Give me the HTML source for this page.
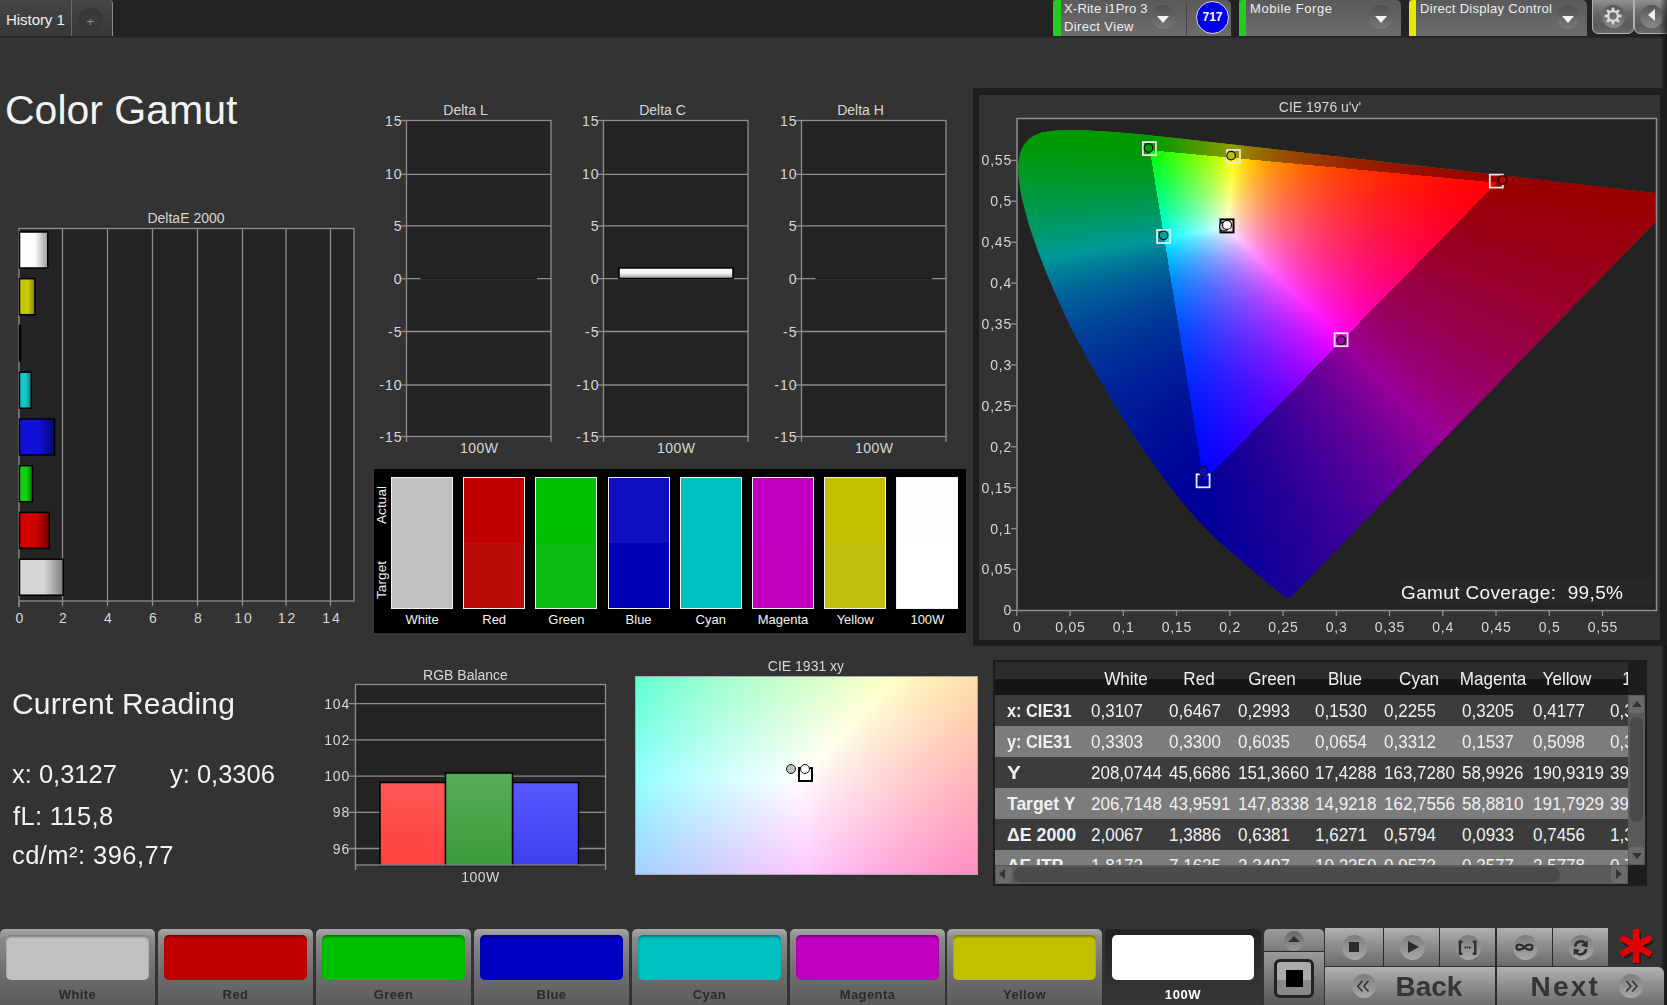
<!DOCTYPE html>
<html><head><meta charset="utf-8">
<style>
*{box-sizing:border-box}
html,body{margin:0;padding:0}
body{width:1667px;height:1005px;background:#333;position:relative;overflow:hidden;font-family:"Liberation Sans",sans-serif;color:#ddd}
.a{position:absolute}
.t{position:absolute;white-space:nowrap;line-height:1}
svg text{font-family:"Liberation Sans",sans-serif}
</style></head>
<body>

<div class="a" style="left:0;top:0;width:1667px;height:37px;background:#232323"></div>
<div class="a" style="left:0;top:37px;width:1667px;height:1px;background:#292929"></div>
<div class="a" style="left:0;top:0;width:71px;height:36px;background:linear-gradient(#454545,#383838)"></div>
<div class="a" style="left:71px;top:0;width:1px;height:36px;background:#6a6a6a"></div>
<div class="a" style="left:72px;top:0;width:41px;height:36px;background:linear-gradient(#454545,#383838);border-right:1px solid #8a8a8a;border-top-right-radius:4px"></div>
<div class="a" style="left:79px;top:8px;width:24px;height:24px;border-radius:50%;background:radial-gradient(#3c3c3c,#353535)"></div>
<div class="t" style="left:86.5px;top:15px;font-size:13px;color:#8a8a8a">+</div>
<div class="t" style="left:6px;top:12px;font-size:15px;letter-spacing:-0.05px;color:#eee">History 1</div>

<div class="a" style="left:1053px;top:0;width:178px;height:36px;background:linear-gradient(#5a5a5a,#6c6c6c);border-top-right-radius:5px"></div>
<div class="a" style="left:1053px;top:0;width:8px;height:36px;background:#22cc22;border-top-left-radius:4px"></div>
<div class="a" style="left:1186px;top:2px;width:1px;height:34px;background:#444"></div>
<div class="t" style="left:1064px;top:2px;font-size:13px;letter-spacing:0.2px;color:#eee">X-Rite i1Pro 3</div>
<div class="t" style="left:1064px;top:20px;font-size:13px;letter-spacing:0.4px;color:#eee">Direct View</div>
<div class="a" style="left:1151px;top:5px;width:24px;height:24px;border-radius:50%;background:linear-gradient(#4e4e4e,#7a7a7a)"></div><div class="a" style="left:1157px;top:15.5px;width:0;height:0;border-left:6px solid transparent;border-right:6px solid transparent;border-top:7px solid #f4f4f4"></div>
<div class="a" style="left:1196px;top:1px;width:33px;height:33px;border-radius:50%;background:#0000e6;border:1.5px solid #ddd"></div>
<div class="t" style="left:1196px;top:11px;width:33px;text-align:center;font-size:12px;font-weight:bold;color:#fff">717</div>
<div class="a" style="left:1239px;top:0;width:162px;height:36px;background:linear-gradient(#5a5a5a,#6c6c6c);border-top-right-radius:5px"></div>
<div class="a" style="left:1239px;top:0;width:7px;height:36px;background:#22cc22;border-top-left-radius:4px"></div>
<div class="t" style="left:1250px;top:2px;font-size:13px;letter-spacing:0.55px;color:#eee">Mobile Forge</div>
<div class="a" style="left:1369px;top:5px;width:24px;height:24px;border-radius:50%;background:linear-gradient(#4e4e4e,#7a7a7a)"></div><div class="a" style="left:1375px;top:15.5px;width:0;height:0;border-left:6px solid transparent;border-right:6px solid transparent;border-top:7px solid #f4f4f4"></div>
<div class="a" style="left:1409px;top:0;width:178px;height:36px;background:linear-gradient(#5a5a5a,#6c6c6c);border-top-right-radius:5px"></div>
<div class="a" style="left:1409px;top:0;width:7px;height:36px;background:#e8e800;border-top-left-radius:4px"></div>
<div class="t" style="left:1420px;top:2px;font-size:13px;letter-spacing:0.3px;color:#eee">Direct Display Control</div>
<div class="a" style="left:1556px;top:5px;width:24px;height:24px;border-radius:50%;background:linear-gradient(#4e4e4e,#7a7a7a)"></div><div class="a" style="left:1562px;top:15.5px;width:0;height:0;border-left:6px solid transparent;border-right:6px solid transparent;border-top:7px solid #f4f4f4"></div>
<div class="a" style="left:1592px;top:-6px;width:42px;height:40px;border:1.3px solid #b0b0b0;border-radius:6px;background:linear-gradient(#a0a0a0,#6a6a6a 45%,#5a5a5a 80%,#6a6a6a)"></div>
<div class="a" style="left:1601.5px;top:4.5px;width:23px;height:23px;border-radius:50%;background:linear-gradient(#555,#8a8a8a)"></div>
<svg class="a" style="left:1600px;top:3px" width="26" height="26" viewBox="-13 -13 26 26"><g fill="#dcdcdc"><rect x="-1.3" y="-8.4" width="2.6" height="3.4" transform="rotate(0)"/><rect x="-1.3" y="-8.4" width="2.6" height="3.4" transform="rotate(45)"/><rect x="-1.3" y="-8.4" width="2.6" height="3.4" transform="rotate(90)"/><rect x="-1.3" y="-8.4" width="2.6" height="3.4" transform="rotate(135)"/><rect x="-1.3" y="-8.4" width="2.6" height="3.4" transform="rotate(180)"/><rect x="-1.3" y="-8.4" width="2.6" height="3.4" transform="rotate(225)"/><rect x="-1.3" y="-8.4" width="2.6" height="3.4" transform="rotate(270)"/><rect x="-1.3" y="-8.4" width="2.6" height="3.4" transform="rotate(315)"/></g><circle r="4.9" fill="none" stroke="#dcdcdc" stroke-width="2.3"/></svg>
<div class="a" style="left:1634px;top:-6px;width:40px;height:40px;border:1.3px solid #b0b0b0;border-radius:6px;background:linear-gradient(#a0a0a0,#6a6a6a 45%,#5a5a5a 80%,#6a6a6a)"></div>
<div class="a" style="left:1639.5px;top:4.5px;width:23px;height:23px;border-radius:50%;background:linear-gradient(#555,#8a8a8a)"></div>
<div class="a" style="left:1647.5px;top:9px;width:0;height:0;border-top:6.5px solid transparent;border-bottom:6.5px solid transparent;border-right:7.5px solid #eee"></div>
<div class="a" style="left:1660px;top:0;width:7px;height:37px;background:linear-gradient(90deg,rgba(0,0,0,0),rgba(0,0,0,.5))"></div>
<div class="a" style="left:1662px;top:37px;width:5px;height:968px;background:linear-gradient(90deg,#262626,#141414)"></div>
<div class="t" style="left:5px;top:90px;font-size:41px;color:#f2f2f2">Color Gamut</div>
<svg class="a" style="left:0;top:0" width="1667" height="1005" viewBox="0 0 1667 1005">
<defs>
<linearGradient id="gw" x1="0" x2="1"><stop offset="0" stop-color="#f4f4f4"/><stop offset=".6" stop-color="#d0d0d0"/><stop offset="1" stop-color="#8a8a8a"/></linearGradient>
</defs>
<rect x="19" y="228.5" width="335" height="372.5" fill="#232323"/>
<line x1="62.5" y1="229" x2="62.5" y2="606" stroke="#8e8e8e" stroke-width="1.3"/>
<line x1="107.5" y1="229" x2="107.5" y2="606" stroke="#8e8e8e" stroke-width="1.3"/>
<line x1="152.5" y1="229" x2="152.5" y2="606" stroke="#8e8e8e" stroke-width="1.3"/>
<line x1="197.5" y1="229" x2="197.5" y2="606" stroke="#8e8e8e" stroke-width="1.3"/>
<line x1="242.5" y1="229" x2="242.5" y2="606" stroke="#8e8e8e" stroke-width="1.3"/>
<line x1="286" y1="229" x2="286" y2="606" stroke="#8e8e8e" stroke-width="1.3"/>
<line x1="330.5" y1="229" x2="330.5" y2="606" stroke="#8e8e8e" stroke-width="1.3"/>
<rect x="19" y="228.5" width="335" height="372.5" fill="none" stroke="#8e8e8e" stroke-width="1.3"/>
<line x1="19" y1="601" x2="19" y2="607" stroke="#8e8e8e" stroke-width="1.6"/>
<text x="186" y="223" font-size="14" fill="#d6d6d6" text-anchor="middle" font-weight="normal" >DeltaE 2000</text>
<text x="20.5" y="623" font-size="14" fill="#d6d6d6" text-anchor="middle" font-weight="normal" letter-spacing="2">0</text>
<text x="64.0" y="623" font-size="14" fill="#d6d6d6" text-anchor="middle" font-weight="normal" letter-spacing="2">2</text>
<text x="109.0" y="623" font-size="14" fill="#d6d6d6" text-anchor="middle" font-weight="normal" letter-spacing="2">4</text>
<text x="154.0" y="623" font-size="14" fill="#d6d6d6" text-anchor="middle" font-weight="normal" letter-spacing="2">6</text>
<text x="199.0" y="623" font-size="14" fill="#d6d6d6" text-anchor="middle" font-weight="normal" letter-spacing="2">8</text>
<text x="244.0" y="623" font-size="14" fill="#d6d6d6" text-anchor="middle" font-weight="normal" letter-spacing="2">10</text>
<text x="287.5" y="623" font-size="14" fill="#d6d6d6" text-anchor="middle" font-weight="normal" letter-spacing="2">12</text>
<text x="332.0" y="623" font-size="14" fill="#d6d6d6" text-anchor="middle" font-weight="normal" letter-spacing="2">14</text>
<defs>
<linearGradient id="db0" x1="0" x2="1"><stop offset="0" stop-color="#fdfdfd"/><stop offset=".55" stop-color="#fdfdfd"/><stop offset="1" stop-color="#9a9a9a"/></linearGradient>
<linearGradient id="db1" x1="0" x2="1"><stop offset="0" stop-color="#c8c800"/><stop offset=".55" stop-color="#c8c800"/><stop offset="1" stop-color="#7e7e00"/></linearGradient>
<linearGradient id="db2" x1="0" x2="1"><stop offset="0" stop-color="#c000c0"/><stop offset=".55" stop-color="#c000c0"/><stop offset="1" stop-color="#600060"/></linearGradient>
<linearGradient id="db3" x1="0" x2="1"><stop offset="0" stop-color="#10c8c8"/><stop offset=".55" stop-color="#10c8c8"/><stop offset="1" stop-color="#0a7a7a"/></linearGradient>
<linearGradient id="db4" x1="0" x2="1"><stop offset="0" stop-color="#1010d8"/><stop offset=".55" stop-color="#1010d8"/><stop offset="1" stop-color="#08086a"/></linearGradient>
<linearGradient id="db5" x1="0" x2="1"><stop offset="0" stop-color="#10d010"/><stop offset=".55" stop-color="#10d010"/><stop offset="1" stop-color="#087008"/></linearGradient>
<linearGradient id="db6" x1="0" x2="1"><stop offset="0" stop-color="#d00000"/><stop offset=".55" stop-color="#d00000"/><stop offset="1" stop-color="#700000"/></linearGradient>
<linearGradient id="db7" x1="0" x2="1"><stop offset="0" stop-color="#d6d6d6"/><stop offset=".55" stop-color="#d6d6d6"/><stop offset="1" stop-color="#808080"/></linearGradient>
</defs>
<rect x="19.5" y="232.0" width="28.3" height="36" fill="url(#db0)" stroke="#000" stroke-width="1.5"/>
<rect x="19.5" y="278.7" width="15.4" height="36" fill="url(#db1)" stroke="#000" stroke-width="1.5"/>
<rect x="19.5" y="325.5" width="0.8" height="36" fill="url(#db2)" stroke="#000" stroke-width="1.5"/>
<rect x="19.5" y="372.2" width="11.7" height="36" fill="url(#db3)" stroke="#000" stroke-width="1.5"/>
<rect x="19.5" y="419.0" width="35.1" height="36" fill="url(#db4)" stroke="#000" stroke-width="1.5"/>
<rect x="19.5" y="465.7" width="13.0" height="36" fill="url(#db5)" stroke="#000" stroke-width="1.5"/>
<rect x="19.5" y="512.4" width="29.8" height="36" fill="url(#db6)" stroke="#000" stroke-width="1.5"/>
<rect x="19.5" y="559.2" width="43.7" height="36" fill="url(#db7)" stroke="#000" stroke-width="1.5"/>
<rect x="406.5" y="120.5" width="144.5" height="316" fill="#232323"/>
<line x1="406.5" y1="174.3" x2="551.0" y2="174.3" stroke="#8e8e8e" stroke-width="1.3"/>
<line x1="406.5" y1="225.9" x2="551.0" y2="225.9" stroke="#8e8e8e" stroke-width="1.3"/>
<line x1="406.5" y1="278.7" x2="551.0" y2="278.7" stroke="#8e8e8e" stroke-width="1.3"/>
<line x1="406.5" y1="331.5" x2="551.0" y2="331.5" stroke="#8e8e8e" stroke-width="1.3"/>
<line x1="406.5" y1="385.0" x2="551.0" y2="385.0" stroke="#8e8e8e" stroke-width="1.3"/>
<rect x="406.5" y="120.5" width="144.5" height="316" fill="none" stroke="#8e8e8e" stroke-width="1.3"/>
<line x1="400.5" y1="120.5" x2="406.5" y2="120.5" stroke="#8e8e8e" stroke-width="1.3"/>
<text x="402.5" y="125.5" font-size="14" fill="#d6d6d6" text-anchor="end" font-weight="normal" letter-spacing="1">15</text>
<line x1="400.5" y1="174.3" x2="406.5" y2="174.3" stroke="#8e8e8e" stroke-width="1.3"/>
<text x="402.5" y="179.3" font-size="14" fill="#d6d6d6" text-anchor="end" font-weight="normal" letter-spacing="1">10</text>
<line x1="400.5" y1="225.9" x2="406.5" y2="225.9" stroke="#8e8e8e" stroke-width="1.3"/>
<text x="402.5" y="230.9" font-size="14" fill="#d6d6d6" text-anchor="end" font-weight="normal" letter-spacing="1">5</text>
<line x1="400.5" y1="278.7" x2="406.5" y2="278.7" stroke="#8e8e8e" stroke-width="1.3"/>
<text x="402.5" y="283.7" font-size="14" fill="#d6d6d6" text-anchor="end" font-weight="normal" letter-spacing="1">0</text>
<line x1="400.5" y1="331.5" x2="406.5" y2="331.5" stroke="#8e8e8e" stroke-width="1.3"/>
<text x="402.5" y="336.5" font-size="14" fill="#d6d6d6" text-anchor="end" font-weight="normal" letter-spacing="1">-5</text>
<line x1="400.5" y1="385.0" x2="406.5" y2="385.0" stroke="#8e8e8e" stroke-width="1.3"/>
<text x="402.5" y="390" font-size="14" fill="#d6d6d6" text-anchor="end" font-weight="normal" letter-spacing="1">-10</text>
<line x1="400.5" y1="436.5" x2="406.5" y2="436.5" stroke="#8e8e8e" stroke-width="1.3"/>
<text x="402.5" y="441.5" font-size="14" fill="#d6d6d6" text-anchor="end" font-weight="normal" letter-spacing="1">-15</text>
<line x1="406.5" y1="436.5" x2="406.5" y2="442" stroke="#8e8e8e" stroke-width="1.3"/>
<line x1="551.0" y1="436.5" x2="551.0" y2="442" stroke="#8e8e8e" stroke-width="1.3"/>
<text x="465.5" y="115" font-size="14" fill="#d6d6d6" text-anchor="middle" font-weight="normal" >Delta L</text>
<text x="479.25" y="453" font-size="14" fill="#d6d6d6" text-anchor="middle" font-weight="normal" letter-spacing="0.5">100W</text>
<line x1="420.5" y1="278.7" x2="537.0" y2="278.7" stroke="#1c1c1c" stroke-width="1.6"/>
<rect x="603.5" y="120.5" width="144.5" height="316" fill="#232323"/>
<line x1="603.5" y1="174.3" x2="748.0" y2="174.3" stroke="#8e8e8e" stroke-width="1.3"/>
<line x1="603.5" y1="225.9" x2="748.0" y2="225.9" stroke="#8e8e8e" stroke-width="1.3"/>
<line x1="603.5" y1="278.7" x2="748.0" y2="278.7" stroke="#8e8e8e" stroke-width="1.3"/>
<line x1="603.5" y1="331.5" x2="748.0" y2="331.5" stroke="#8e8e8e" stroke-width="1.3"/>
<line x1="603.5" y1="385.0" x2="748.0" y2="385.0" stroke="#8e8e8e" stroke-width="1.3"/>
<rect x="603.5" y="120.5" width="144.5" height="316" fill="none" stroke="#8e8e8e" stroke-width="1.3"/>
<line x1="597.5" y1="120.5" x2="603.5" y2="120.5" stroke="#8e8e8e" stroke-width="1.3"/>
<text x="599.5" y="125.5" font-size="14" fill="#d6d6d6" text-anchor="end" font-weight="normal" letter-spacing="1">15</text>
<line x1="597.5" y1="174.3" x2="603.5" y2="174.3" stroke="#8e8e8e" stroke-width="1.3"/>
<text x="599.5" y="179.3" font-size="14" fill="#d6d6d6" text-anchor="end" font-weight="normal" letter-spacing="1">10</text>
<line x1="597.5" y1="225.9" x2="603.5" y2="225.9" stroke="#8e8e8e" stroke-width="1.3"/>
<text x="599.5" y="230.9" font-size="14" fill="#d6d6d6" text-anchor="end" font-weight="normal" letter-spacing="1">5</text>
<line x1="597.5" y1="278.7" x2="603.5" y2="278.7" stroke="#8e8e8e" stroke-width="1.3"/>
<text x="599.5" y="283.7" font-size="14" fill="#d6d6d6" text-anchor="end" font-weight="normal" letter-spacing="1">0</text>
<line x1="597.5" y1="331.5" x2="603.5" y2="331.5" stroke="#8e8e8e" stroke-width="1.3"/>
<text x="599.5" y="336.5" font-size="14" fill="#d6d6d6" text-anchor="end" font-weight="normal" letter-spacing="1">-5</text>
<line x1="597.5" y1="385.0" x2="603.5" y2="385.0" stroke="#8e8e8e" stroke-width="1.3"/>
<text x="599.5" y="390" font-size="14" fill="#d6d6d6" text-anchor="end" font-weight="normal" letter-spacing="1">-10</text>
<line x1="597.5" y1="436.5" x2="603.5" y2="436.5" stroke="#8e8e8e" stroke-width="1.3"/>
<text x="599.5" y="441.5" font-size="14" fill="#d6d6d6" text-anchor="end" font-weight="normal" letter-spacing="1">-15</text>
<line x1="603.5" y1="436.5" x2="603.5" y2="442" stroke="#8e8e8e" stroke-width="1.3"/>
<line x1="748.0" y1="436.5" x2="748.0" y2="442" stroke="#8e8e8e" stroke-width="1.3"/>
<text x="662.5" y="115" font-size="14" fill="#d6d6d6" text-anchor="middle" font-weight="normal" >Delta C</text>
<text x="676.25" y="453" font-size="14" fill="#d6d6d6" text-anchor="middle" font-weight="normal" letter-spacing="0.5">100W</text>
<defs><linearGradient id="gc" x1="0" y1="0" x2="0" y2="1"><stop offset="0" stop-color="#fff"/><stop offset=".5" stop-color="#f4f4f4"/><stop offset="1" stop-color="#9a9a9a"/></linearGradient></defs>
<rect x="619.0" y="268" width="114" height="10.5" fill="url(#gc)" stroke="#000" stroke-width="1.5"/>
<rect x="801.5" y="120.5" width="144.5" height="316" fill="#232323"/>
<line x1="801.5" y1="174.3" x2="946.0" y2="174.3" stroke="#8e8e8e" stroke-width="1.3"/>
<line x1="801.5" y1="225.9" x2="946.0" y2="225.9" stroke="#8e8e8e" stroke-width="1.3"/>
<line x1="801.5" y1="278.7" x2="946.0" y2="278.7" stroke="#8e8e8e" stroke-width="1.3"/>
<line x1="801.5" y1="331.5" x2="946.0" y2="331.5" stroke="#8e8e8e" stroke-width="1.3"/>
<line x1="801.5" y1="385.0" x2="946.0" y2="385.0" stroke="#8e8e8e" stroke-width="1.3"/>
<rect x="801.5" y="120.5" width="144.5" height="316" fill="none" stroke="#8e8e8e" stroke-width="1.3"/>
<line x1="795.5" y1="120.5" x2="801.5" y2="120.5" stroke="#8e8e8e" stroke-width="1.3"/>
<text x="797.5" y="125.5" font-size="14" fill="#d6d6d6" text-anchor="end" font-weight="normal" letter-spacing="1">15</text>
<line x1="795.5" y1="174.3" x2="801.5" y2="174.3" stroke="#8e8e8e" stroke-width="1.3"/>
<text x="797.5" y="179.3" font-size="14" fill="#d6d6d6" text-anchor="end" font-weight="normal" letter-spacing="1">10</text>
<line x1="795.5" y1="225.9" x2="801.5" y2="225.9" stroke="#8e8e8e" stroke-width="1.3"/>
<text x="797.5" y="230.9" font-size="14" fill="#d6d6d6" text-anchor="end" font-weight="normal" letter-spacing="1">5</text>
<line x1="795.5" y1="278.7" x2="801.5" y2="278.7" stroke="#8e8e8e" stroke-width="1.3"/>
<text x="797.5" y="283.7" font-size="14" fill="#d6d6d6" text-anchor="end" font-weight="normal" letter-spacing="1">0</text>
<line x1="795.5" y1="331.5" x2="801.5" y2="331.5" stroke="#8e8e8e" stroke-width="1.3"/>
<text x="797.5" y="336.5" font-size="14" fill="#d6d6d6" text-anchor="end" font-weight="normal" letter-spacing="1">-5</text>
<line x1="795.5" y1="385.0" x2="801.5" y2="385.0" stroke="#8e8e8e" stroke-width="1.3"/>
<text x="797.5" y="390" font-size="14" fill="#d6d6d6" text-anchor="end" font-weight="normal" letter-spacing="1">-10</text>
<line x1="795.5" y1="436.5" x2="801.5" y2="436.5" stroke="#8e8e8e" stroke-width="1.3"/>
<text x="797.5" y="441.5" font-size="14" fill="#d6d6d6" text-anchor="end" font-weight="normal" letter-spacing="1">-15</text>
<line x1="801.5" y1="436.5" x2="801.5" y2="442" stroke="#8e8e8e" stroke-width="1.3"/>
<line x1="946.0" y1="436.5" x2="946.0" y2="442" stroke="#8e8e8e" stroke-width="1.3"/>
<text x="860.5" y="115" font-size="14" fill="#d6d6d6" text-anchor="middle" font-weight="normal" >Delta H</text>
<text x="874.25" y="453" font-size="14" fill="#d6d6d6" text-anchor="middle" font-weight="normal" letter-spacing="0.5">100W</text>
<line x1="815.5" y1="278.7" x2="932.0" y2="278.7" stroke="#1c1c1c" stroke-width="1.6"/>
</svg>
<div class="a" style="left:374px;top:469px;width:592px;height:164px;background:#000"></div>
<div class="a" style="left:391.0px;top:477px;width:62px;height:132px;border:1.5px solid #f0f0f0;background:linear-gradient(#c0c0c0 0 50%,#c0c0c0 50% 100%)"></div>
<div class="t" style="left:381.0px;top:613px;width:82px;text-align:center;font-size:13px;color:#f4f4f4">White</div>
<div class="a" style="left:463.2px;top:477px;width:62px;height:132px;border:1.5px solid #f0f0f0;background:linear-gradient(#c00000 0 50%,#bb0c0c 50% 100%)"></div>
<div class="t" style="left:453.2px;top:613px;width:82px;text-align:center;font-size:13px;color:#f4f4f4">Red</div>
<div class="a" style="left:535.4px;top:477px;width:62px;height:132px;border:1.5px solid #f0f0f0;background:linear-gradient(#00c000 0 50%,#0cbc12 50% 100%)"></div>
<div class="t" style="left:525.4px;top:613px;width:82px;text-align:center;font-size:13px;color:#f4f4f4">Green</div>
<div class="a" style="left:607.6px;top:477px;width:62px;height:132px;border:1.5px solid #f0f0f0;background:linear-gradient(#1010c2 0 50%,#0000bb 50% 100%)"></div>
<div class="t" style="left:597.6px;top:613px;width:82px;text-align:center;font-size:13px;color:#f4f4f4">Blue</div>
<div class="a" style="left:679.8px;top:477px;width:62px;height:132px;border:1.5px solid #f0f0f0;background:linear-gradient(#00c0c0 0 50%,#00bfbf 50% 100%)"></div>
<div class="t" style="left:669.8px;top:613px;width:82px;text-align:center;font-size:13px;color:#f4f4f4">Cyan</div>
<div class="a" style="left:752.0px;top:477px;width:62px;height:132px;border:1.5px solid #f0f0f0;background:linear-gradient(#c000c0 0 50%,#be00be 50% 100%)"></div>
<div class="t" style="left:742.0px;top:613px;width:82px;text-align:center;font-size:13px;color:#f4f4f4">Magenta</div>
<div class="a" style="left:824.2px;top:477px;width:62px;height:132px;border:1.5px solid #f0f0f0;background:linear-gradient(#c0c000 0 50%,#c0c00a 50% 100%)"></div>
<div class="t" style="left:814.2px;top:613px;width:82px;text-align:center;font-size:13px;color:#f4f4f4">Yellow</div>
<div class="a" style="left:896.4px;top:477px;width:62px;height:132px;border:1.5px solid #f0f0f0;background:linear-gradient(#fefefe 0 50%,#ffffff 50% 100%)"></div>
<div class="t" style="left:886.4px;top:613px;width:82px;text-align:center;font-size:13px;color:#f4f4f4">100W</div>
<div class="t" style="left:375px;top:524px;font-size:13.5px;letter-spacing:0.1px;color:#f0f0f0;transform:rotate(-90deg);transform-origin:0 0">Actual</div>
<div class="t" style="left:375px;top:599px;font-size:13.5px;letter-spacing:0.1px;color:#f0f0f0;transform:rotate(-90deg);transform-origin:0 0">Target</div>
<div class="a" style="left:973px;top:88px;width:694px;height:558px;background:#1d1d1d"></div>
<div class="a" style="left:979px;top:95px;width:681px;height:545px;background:#333"></div>
<div class="a" style="left:1017px;top:119px;width:640px;height:492px;background:#232323"></div>
<svg class="a" style="left:0;top:0" width="1667" height="1005" viewBox="0 0 1667 1005">
<defs><clipPath id="hs"><path d="M1290.4,596.9 L1289.2,597.4 L1285.4,596.6 L1278.9,591.9 L1266.8,581.9 L1247.0,565.4 L1216.7,539.1 L1170.3,486.9 L1138.9,443.1 L1105.0,388.8 L1072.3,330.0 L1046.8,273.6 L1029.4,226.0 L1020.5,190.6 L1018.3,166.0 L1021.7,149.1 L1029.9,138.3 L1041.4,132.8 L1055.1,130.8 L1070.1,130.3 L1085.3,130.5 L1101.2,131.2 L1118.3,132.5 L1136.8,134.1 L1157.3,136.2 L1179.9,138.6 L1204.9,141.4 L1232.5,144.5 L1263.0,148.0 L1296.2,151.9 L1332.0,156.0 L1369.8,160.3 L1408.8,164.8 L1446.5,169.1 L1483.2,173.3 L1516.4,177.1 L1545.8,180.5 L1570.8,183.4 L1591.8,185.8 L1609.5,187.8 L1624.8,189.6 L1637.7,191.0 L1648.3,192.3 L1656.3,193.2 L1667.3,194.4 L1677.0,195.6 L1680.7,196.0 Z"/></clipPath><clipPath id="pl"><rect x="1017" y="119" width="640" height="492"/></clipPath>
<linearGradient id="fl" gradientUnits="userSpaceOnUse" x1="1100" y1="130" x2="1150" y2="560"><stop offset="0" stop-color="#009a00"/><stop offset=".35" stop-color="#009a40"/><stop offset=".5" stop-color="#009090"/><stop offset=".75" stop-color="#002a99"/><stop offset="1" stop-color="#08009a"/></linearGradient>
<linearGradient id="fr" gradientUnits="userSpaceOnUse" x1="1600" y1="200" x2="1300" y2="560"><stop offset="0" stop-color="#9a0000"/><stop offset=".45" stop-color="#9a0060"/><stop offset=".7" stop-color="#60009a"/><stop offset="1" stop-color="#1a009a"/></linearGradient>
<linearGradient id="ft" gradientUnits="userSpaceOnUse" x1="1150" y1="140" x2="1500" y2="180"><stop offset="0" stop-color="#2a9a00"/><stop offset=".3" stop-color="#8a9a00"/><stop offset="1" stop-color="#9a1000"/></linearGradient>
<radialGradient id="fw" gradientUnits="userSpaceOnUse" cx="1227.5" cy="227.2" r="110"><stop offset="0" stop-color="#fff"/><stop offset=".15" stop-color="#fff" stop-opacity=".9"/><stop offset="1" stop-color="#fff" stop-opacity="0"/></radialGradient>
<linearGradient id="fi" gradientUnits="userSpaceOnUse" x1="1149.925" y1="150.16249999999997" x2="1203.6421052631579" y2="481.2105263157894"><stop offset="0" stop-color="#00ff00"/><stop offset=".35" stop-color="#00ffff"/><stop offset=".7" stop-color="#0060ff"/><stop offset="1" stop-color="#0000ff"/></linearGradient>
<linearGradient id="fj" gradientUnits="userSpaceOnUse" x1="1149.925" y1="150.16249999999997" x2="1496.8" y2="182.5735915492957"><stop offset="0" stop-color="#ffff00" stop-opacity="0"/><stop offset=".5" stop-color="#ff00c0" stop-opacity=".8"/><stop offset="1" stop-color="#ff0000"/></linearGradient>
</defs><g clip-path="url(#pl)"><g clip-path="url(#hs)">
<rect x="1017" y="119" width="640" height="492" fill="url(#fl)"/>
<polygon points="1558.8,119 1700,119 1700,611 1076.5,611" fill="url(#fr)"/>
<polygon points="1017,119 1540,119 1496.8,182.6 1017,136" fill="url(#ft)"/>
<polygon points="1149.9,150.2 1496.8,182.6 1203.6,481.2" fill="url(#fi)"/>
<polygon points="1149.9,150.2 1496.8,182.6 1203.6,481.2" fill="url(#fj)"/>
<polygon points="1149.9,150.2 1496.8,182.6 1203.6,481.2" fill="url(#fw)"/>
</g></g></svg>
<div class="a" style="left:636px;top:677px;width:341px;height:197px;background:linear-gradient(135deg,#80ffd0,#ddffee 35%,#fff8f0 55%,#ffb0c8)"></div>
<canvas id="cie" class="a" style="left:1017px;top:119px" width="640" height="492"></canvas>
<svg class="a" style="left:0;top:0" width="1667" height="1005" viewBox="0 0 1667 1005">
<rect x="1017" y="118.5" width="639.5" height="492" fill="none" stroke="#8e8e8e" stroke-width="1.5"/>
<line x1="1011" y1="610.4" x2="1017" y2="610.4" stroke="#8e8e8e" stroke-width="1.3"/>
<text x="1012" y="615.4" font-size="14" fill="#d6d6d6" text-anchor="end" font-weight="normal" letter-spacing="0.8">0</text>
<line x1="1016.8" y1="610.5" x2="1016.8" y2="616" stroke="#8e8e8e" stroke-width="1.3"/>
<text x="1017.1999999999999" y="632" font-size="14" fill="#d6d6d6" text-anchor="middle" font-weight="normal" letter-spacing="0.8">0</text>
<line x1="1011" y1="569.5" x2="1017" y2="569.5" stroke="#8e8e8e" stroke-width="1.3"/>
<text x="1012" y="574.49" font-size="14" fill="#d6d6d6" text-anchor="end" font-weight="normal" letter-spacing="0.8">0,05</text>
<line x1="1070.0" y1="610.5" x2="1070.0" y2="616" stroke="#8e8e8e" stroke-width="1.3"/>
<text x="1070.45" y="632" font-size="14" fill="#d6d6d6" text-anchor="middle" font-weight="normal" letter-spacing="0.8">0,05</text>
<line x1="1011" y1="528.6" x2="1017" y2="528.6" stroke="#8e8e8e" stroke-width="1.3"/>
<text x="1012" y="533.5799999999999" font-size="14" fill="#d6d6d6" text-anchor="end" font-weight="normal" letter-spacing="0.8">0,1</text>
<line x1="1123.3" y1="610.5" x2="1123.3" y2="616" stroke="#8e8e8e" stroke-width="1.3"/>
<text x="1123.7" y="632" font-size="14" fill="#d6d6d6" text-anchor="middle" font-weight="normal" letter-spacing="0.8">0,1</text>
<line x1="1011" y1="487.7" x2="1017" y2="487.7" stroke="#8e8e8e" stroke-width="1.3"/>
<text x="1012" y="492.66999999999996" font-size="14" fill="#d6d6d6" text-anchor="end" font-weight="normal" letter-spacing="0.8">0,15</text>
<line x1="1176.5" y1="610.5" x2="1176.5" y2="616" stroke="#8e8e8e" stroke-width="1.3"/>
<text x="1176.95" y="632" font-size="14" fill="#d6d6d6" text-anchor="middle" font-weight="normal" letter-spacing="0.8">0,15</text>
<line x1="1011" y1="446.8" x2="1017" y2="446.8" stroke="#8e8e8e" stroke-width="1.3"/>
<text x="1012" y="451.76" font-size="14" fill="#d6d6d6" text-anchor="end" font-weight="normal" letter-spacing="0.8">0,2</text>
<line x1="1229.8" y1="610.5" x2="1229.8" y2="616" stroke="#8e8e8e" stroke-width="1.3"/>
<text x="1230.2" y="632" font-size="14" fill="#d6d6d6" text-anchor="middle" font-weight="normal" letter-spacing="0.8">0,2</text>
<line x1="1011" y1="405.8" x2="1017" y2="405.8" stroke="#8e8e8e" stroke-width="1.3"/>
<text x="1012" y="410.84999999999997" font-size="14" fill="#d6d6d6" text-anchor="end" font-weight="normal" letter-spacing="0.8">0,25</text>
<line x1="1283.0" y1="610.5" x2="1283.0" y2="616" stroke="#8e8e8e" stroke-width="1.3"/>
<text x="1283.45" y="632" font-size="14" fill="#d6d6d6" text-anchor="middle" font-weight="normal" letter-spacing="0.8">0,25</text>
<line x1="1011" y1="364.9" x2="1017" y2="364.9" stroke="#8e8e8e" stroke-width="1.3"/>
<text x="1012" y="369.93999999999994" font-size="14" fill="#d6d6d6" text-anchor="end" font-weight="normal" letter-spacing="0.8">0,3</text>
<line x1="1336.3" y1="610.5" x2="1336.3" y2="616" stroke="#8e8e8e" stroke-width="1.3"/>
<text x="1336.7" y="632" font-size="14" fill="#d6d6d6" text-anchor="middle" font-weight="normal" letter-spacing="0.8">0,3</text>
<line x1="1011" y1="324.0" x2="1017" y2="324.0" stroke="#8e8e8e" stroke-width="1.3"/>
<text x="1012" y="329.0299999999999" font-size="14" fill="#d6d6d6" text-anchor="end" font-weight="normal" letter-spacing="0.8">0,35</text>
<line x1="1389.5" y1="610.5" x2="1389.5" y2="616" stroke="#8e8e8e" stroke-width="1.3"/>
<text x="1389.95" y="632" font-size="14" fill="#d6d6d6" text-anchor="middle" font-weight="normal" letter-spacing="0.8">0,35</text>
<line x1="1011" y1="283.1" x2="1017" y2="283.1" stroke="#8e8e8e" stroke-width="1.3"/>
<text x="1012" y="288.11999999999995" font-size="14" fill="#d6d6d6" text-anchor="end" font-weight="normal" letter-spacing="0.8">0,4</text>
<line x1="1442.8" y1="610.5" x2="1442.8" y2="616" stroke="#8e8e8e" stroke-width="1.3"/>
<text x="1443.2" y="632" font-size="14" fill="#d6d6d6" text-anchor="middle" font-weight="normal" letter-spacing="0.8">0,4</text>
<line x1="1011" y1="242.2" x2="1017" y2="242.2" stroke="#8e8e8e" stroke-width="1.3"/>
<text x="1012" y="247.20999999999992" font-size="14" fill="#d6d6d6" text-anchor="end" font-weight="normal" letter-spacing="0.8">0,45</text>
<line x1="1496.0" y1="610.5" x2="1496.0" y2="616" stroke="#8e8e8e" stroke-width="1.3"/>
<text x="1496.45" y="632" font-size="14" fill="#d6d6d6" text-anchor="middle" font-weight="normal" letter-spacing="0.8">0,45</text>
<line x1="1011" y1="201.3" x2="1017" y2="201.3" stroke="#8e8e8e" stroke-width="1.3"/>
<text x="1012" y="206.29999999999995" font-size="14" fill="#d6d6d6" text-anchor="end" font-weight="normal" letter-spacing="0.8">0,5</text>
<line x1="1549.3" y1="610.5" x2="1549.3" y2="616" stroke="#8e8e8e" stroke-width="1.3"/>
<text x="1549.7" y="632" font-size="14" fill="#d6d6d6" text-anchor="middle" font-weight="normal" letter-spacing="0.8">0,5</text>
<line x1="1011" y1="160.4" x2="1017" y2="160.4" stroke="#8e8e8e" stroke-width="1.3"/>
<text x="1012" y="165.38999999999993" font-size="14" fill="#d6d6d6" text-anchor="end" font-weight="normal" letter-spacing="0.8">0,55</text>
<line x1="1602.5" y1="610.5" x2="1602.5" y2="616" stroke="#8e8e8e" stroke-width="1.3"/>
<text x="1602.95" y="632" font-size="14" fill="#d6d6d6" text-anchor="middle" font-weight="normal" letter-spacing="0.8">0,55</text>
<text x="1320" y="112" font-size="14" fill="#d6d6d6" text-anchor="middle" font-weight="normal" >CIE 1976 u'v'</text>
<rect x="1489.8" y="174.6" width="13" height="13" fill="none" stroke="#e8e8e8" stroke-width="1.8"/>
<rect x="1142.9" y="142.1" width="13" height="13" fill="none" stroke="#e8e8e8" stroke-width="1.8"/>
<rect x="1196.6" y="474.3" width="13" height="13" fill="none" stroke="#e8e8e8" stroke-width="1.8"/>
<rect x="1157.1" y="230.0" width="13" height="13" fill="none" stroke="#e8e8e8" stroke-width="1.8"/>
<rect x="1334.6" y="333.2" width="13" height="13" fill="none" stroke="#e8e8e8" stroke-width="1.8"/>
<rect x="1227.0" y="150.0" width="13" height="13" fill="none" stroke="#e8e8e8" stroke-width="1.8"/>
<circle cx="1502.5" cy="180.1" r="4.3" fill="#c00000" stroke="#111" stroke-width="1.2"/>
<circle cx="1148.5" cy="148.0" r="4.3" fill="#009a00" stroke="#111" stroke-width="1.2"/>
<circle cx="1203.7" cy="471.5" r="4.3" fill="#1010b0" stroke="#111" stroke-width="1.2"/>
<circle cx="1163.6" cy="235.3" r="4.3" fill="#00a0a0" stroke="#111" stroke-width="1.2"/>
<circle cx="1341.1" cy="340.2" r="4.3" fill="#a000a0" stroke="#111" stroke-width="1.2"/>
<circle cx="1231.1" cy="155.6" r="4.3" fill="#c0c000" stroke="#111" stroke-width="1.2"/>
<rect x="1220.5" y="219.4" width="13" height="13" fill="none" stroke="#000" stroke-width="2"/>
<circle cx="1224.0" cy="226.6" r="4.5" fill="#bbb" stroke="#111" stroke-width="1.2"/>
<circle cx="1227.0" cy="224.9" r="4.5" fill="#fff" stroke="#111" stroke-width="1.2"/>
</svg>
<div class="a" style="left:1401px;top:578px;width:252px;height:27px;background:rgba(40,40,40,.92)"></div>
<div class="t" style="left:1401px;top:583px;font-size:19px;letter-spacing:0.36px;color:#f4f4f4">Gamut Coverage:&nbsp; 99,5%</div>
<div class="t" style="left:12px;top:689px;font-size:30px;letter-spacing:0.2px;color:#f2f2f2">Current Reading</div>
<div class="t" style="left:12px;top:762px;font-size:25.5px;color:#f2f2f2">x: 0,3127</div>
<div class="t" style="left:170px;top:762px;font-size:25.5px;color:#f2f2f2">y: 0,3306</div>
<div class="t" style="left:13px;top:803.5px;font-size:25.5px;letter-spacing:0.35px;color:#f2f2f2">fL: 115,8</div>
<div class="t" style="left:12px;top:842.5px;font-size:25.5px;letter-spacing:0.45px;color:#f2f2f2">cd/m²: 396,77</div>
<svg class="a" style="left:0;top:0" width="1667" height="1005" viewBox="0 0 1667 1005">
<rect x="355.5" y="684.5" width="250" height="180.5" fill="#232323"/>
<line x1="349" y1="703.7" x2="605.5" y2="703.7" stroke="#8e8e8e" stroke-width="1.3"/>
<text x="350" y="708.7" font-size="14" fill="#d6d6d6" text-anchor="end" font-weight="normal" letter-spacing="0.8">104</text>
<line x1="349" y1="739.9" x2="605.5" y2="739.9" stroke="#8e8e8e" stroke-width="1.3"/>
<text x="350" y="744.9" font-size="14" fill="#d6d6d6" text-anchor="end" font-weight="normal" letter-spacing="0.8">102</text>
<line x1="349" y1="776.1" x2="605.5" y2="776.1" stroke="#8e8e8e" stroke-width="1.3"/>
<text x="350" y="781.1" font-size="14" fill="#d6d6d6" text-anchor="end" font-weight="normal" letter-spacing="0.8">100</text>
<line x1="349" y1="812.3" x2="605.5" y2="812.3" stroke="#8e8e8e" stroke-width="1.3"/>
<text x="350" y="817.3000000000001" font-size="14" fill="#d6d6d6" text-anchor="end" font-weight="normal" letter-spacing="0.8">98</text>
<line x1="349" y1="848.5" x2="605.5" y2="848.5" stroke="#8e8e8e" stroke-width="1.3"/>
<text x="350" y="853.5" font-size="14" fill="#d6d6d6" text-anchor="end" font-weight="normal" letter-spacing="0.8">96</text>
<defs>
<linearGradient id="br" x1="0" y1="0" x2="0" y2="1"><stop offset="0" stop-color="#ff5656"/><stop offset="1" stop-color="#ff4040"/></linearGradient>
<linearGradient id="bg" x1="0" y1="0" x2="0" y2="1"><stop offset="0" stop-color="#58ac58"/><stop offset="1" stop-color="#3c9c3c"/></linearGradient>
<linearGradient id="bb" x1="0" y1="0" x2="0" y2="1"><stop offset="0" stop-color="#5858ff"/><stop offset="1" stop-color="#4040f0"/></linearGradient>
</defs>
<rect x="380" y="782.5" width="65.5" height="83" fill="url(#br)" stroke="#000" stroke-width="1.5"/>
<rect x="512.5" y="782.5" width="66" height="83" fill="url(#bb)" stroke="#000" stroke-width="1.5"/>
<rect x="445.5" y="773" width="67" height="92.5" fill="url(#bg)" stroke="#000" stroke-width="1.5"/>
<rect x="355.5" y="684.5" width="250" height="180.5" fill="none" stroke="#8e8e8e" stroke-width="1.3"/>
<line x1="355.5" y1="865" x2="355.5" y2="870" stroke="#8e8e8e" stroke-width="1.3"/>
<line x1="605.5" y1="865" x2="605.5" y2="870" stroke="#8e8e8e" stroke-width="1.3"/>
<text x="465.5" y="680" font-size="14" fill="#d6d6d6" text-anchor="middle" font-weight="normal" >RGB Balance</text>
<text x="480.5" y="882" font-size="14" fill="#d6d6d6" text-anchor="middle" font-weight="normal" letter-spacing="0.5">100W</text>
<text x="806" y="671" font-size="14" fill="#d6d6d6" text-anchor="middle" font-weight="normal" >CIE 1931 xy</text>
</svg>
<canvas id="xy" class="a" style="left:636px;top:677px" width="341" height="197"></canvas>
<div class="a" style="left:635px;top:676px;width:343px;height:199px;border:1.5px solid #aaa"></div>
<div class="a" style="left:786px;top:764px;width:10px;height:10px;border-radius:50%;background:#c0c0c0;border:1.4px solid #111"></div>
<div class="a" style="left:798px;top:767px;width:15px;height:15px;border:2px solid #000"></div>
<div class="a" style="left:800px;top:764px;width:10px;height:10px;border-radius:50%;background:#fff;border:1.4px solid #111"></div>
<div class="a" style="left:993px;top:660px;width:654px;height:226px;background:#1d1d1d"></div>
<div class="a" style="left:995px;top:662px;width:633px;height:33px;background:linear-gradient(#2c2c2c 0 50%,#151515 50% 100%)"></div>
<div class="a" style="left:995px;top:695px;width:633px;height:170px;overflow:hidden">
<div class="a" style="left:0;top:0px;width:633px;height:31px;background:#3c3c3c"></div>
<div class="t" style="left:12px;top:6px;font-size:19px;font-weight:bold;color:#f0f0f0;transform:scaleX(0.86);transform-origin:0 0">x: CIE31</div>
<div class="t" style="left:96px;top:6px;font-size:19px;color:#f0f0f0;transform:scaleX(.895);transform-origin:0 0">0,3107</div>
<div class="t" style="left:174px;top:6px;font-size:19px;color:#f0f0f0;transform:scaleX(.895);transform-origin:0 0">0,6467</div>
<div class="t" style="left:243px;top:6px;font-size:19px;color:#f0f0f0;transform:scaleX(.895);transform-origin:0 0">0,2993</div>
<div class="t" style="left:320px;top:6px;font-size:19px;color:#f0f0f0;transform:scaleX(.895);transform-origin:0 0">0,1530</div>
<div class="t" style="left:389px;top:6px;font-size:19px;color:#f0f0f0;transform:scaleX(.895);transform-origin:0 0">0,2255</div>
<div class="t" style="left:467px;top:6px;font-size:19px;color:#f0f0f0;transform:scaleX(.895);transform-origin:0 0">0,3205</div>
<div class="t" style="left:538px;top:6px;font-size:19px;color:#f0f0f0;transform:scaleX(.895);transform-origin:0 0">0,4177</div>
<div class="t" style="left:615px;top:6px;font-size:19px;color:#f0f0f0;transform:scaleX(.895);transform-origin:0 0">0,3</div>
<div class="a" style="left:0;top:31px;width:633px;height:31px;background:#7c7c7c"></div>
<div class="t" style="left:12px;top:37px;font-size:19px;font-weight:bold;color:#f0f0f0;transform:scaleX(0.86);transform-origin:0 0">y: CIE31</div>
<div class="t" style="left:96px;top:37px;font-size:19px;color:#f0f0f0;transform:scaleX(.895);transform-origin:0 0">0,3303</div>
<div class="t" style="left:174px;top:37px;font-size:19px;color:#f0f0f0;transform:scaleX(.895);transform-origin:0 0">0,3300</div>
<div class="t" style="left:243px;top:37px;font-size:19px;color:#f0f0f0;transform:scaleX(.895);transform-origin:0 0">0,6035</div>
<div class="t" style="left:320px;top:37px;font-size:19px;color:#f0f0f0;transform:scaleX(.895);transform-origin:0 0">0,0654</div>
<div class="t" style="left:389px;top:37px;font-size:19px;color:#f0f0f0;transform:scaleX(.895);transform-origin:0 0">0,3312</div>
<div class="t" style="left:467px;top:37px;font-size:19px;color:#f0f0f0;transform:scaleX(.895);transform-origin:0 0">0,1537</div>
<div class="t" style="left:538px;top:37px;font-size:19px;color:#f0f0f0;transform:scaleX(.895);transform-origin:0 0">0,5098</div>
<div class="t" style="left:615px;top:37px;font-size:19px;color:#f0f0f0;transform:scaleX(.895);transform-origin:0 0">0,3</div>
<div class="a" style="left:0;top:62px;width:633px;height:31px;background:#3c3c3c"></div>
<div class="t" style="left:12px;top:68px;font-size:19px;font-weight:bold;color:#f0f0f0;transform:scaleX(1.1);transform-origin:0 0">Y</div>
<div class="t" style="left:96px;top:68px;font-size:19px;color:#f0f0f0;transform:scaleX(.895);transform-origin:0 0">208,0744</div>
<div class="t" style="left:174px;top:68px;font-size:19px;color:#f0f0f0;transform:scaleX(.895);transform-origin:0 0">45,6686</div>
<div class="t" style="left:243px;top:68px;font-size:19px;color:#f0f0f0;transform:scaleX(.895);transform-origin:0 0">151,3660</div>
<div class="t" style="left:320px;top:68px;font-size:19px;color:#f0f0f0;transform:scaleX(.895);transform-origin:0 0">17,4288</div>
<div class="t" style="left:389px;top:68px;font-size:19px;color:#f0f0f0;transform:scaleX(.895);transform-origin:0 0">163,7280</div>
<div class="t" style="left:467px;top:68px;font-size:19px;color:#f0f0f0;transform:scaleX(.895);transform-origin:0 0">58,9926</div>
<div class="t" style="left:538px;top:68px;font-size:19px;color:#f0f0f0;transform:scaleX(.895);transform-origin:0 0">190,9319</div>
<div class="t" style="left:615px;top:68px;font-size:19px;color:#f0f0f0;transform:scaleX(.895);transform-origin:0 0">39</div>
<div class="a" style="left:0;top:93px;width:633px;height:31px;background:#7c7c7c"></div>
<div class="t" style="left:12px;top:99px;font-size:19px;font-weight:bold;color:#f0f0f0;transform:scaleX(0.92);transform-origin:0 0">Target Y</div>
<div class="t" style="left:96px;top:99px;font-size:19px;color:#f0f0f0;transform:scaleX(.895);transform-origin:0 0">206,7148</div>
<div class="t" style="left:174px;top:99px;font-size:19px;color:#f0f0f0;transform:scaleX(.895);transform-origin:0 0">43,9591</div>
<div class="t" style="left:243px;top:99px;font-size:19px;color:#f0f0f0;transform:scaleX(.895);transform-origin:0 0">147,8338</div>
<div class="t" style="left:320px;top:99px;font-size:19px;color:#f0f0f0;transform:scaleX(.895);transform-origin:0 0">14,9218</div>
<div class="t" style="left:389px;top:99px;font-size:19px;color:#f0f0f0;transform:scaleX(.895);transform-origin:0 0">162,7556</div>
<div class="t" style="left:467px;top:99px;font-size:19px;color:#f0f0f0;transform:scaleX(.895);transform-origin:0 0">58,8810</div>
<div class="t" style="left:538px;top:99px;font-size:19px;color:#f0f0f0;transform:scaleX(.895);transform-origin:0 0">191,7929</div>
<div class="t" style="left:615px;top:99px;font-size:19px;color:#f0f0f0;transform:scaleX(.895);transform-origin:0 0">39</div>
<div class="a" style="left:0;top:124px;width:633px;height:31px;background:#3c3c3c"></div>
<div class="t" style="left:12px;top:130px;font-size:19px;font-weight:bold;color:#f0f0f0;transform:scaleX(0.935);transform-origin:0 0">ΔE 2000</div>
<div class="t" style="left:96px;top:130px;font-size:19px;color:#f0f0f0;transform:scaleX(.895);transform-origin:0 0">2,0067</div>
<div class="t" style="left:174px;top:130px;font-size:19px;color:#f0f0f0;transform:scaleX(.895);transform-origin:0 0">1,3886</div>
<div class="t" style="left:243px;top:130px;font-size:19px;color:#f0f0f0;transform:scaleX(.895);transform-origin:0 0">0,6381</div>
<div class="t" style="left:320px;top:130px;font-size:19px;color:#f0f0f0;transform:scaleX(.895);transform-origin:0 0">1,6271</div>
<div class="t" style="left:389px;top:130px;font-size:19px;color:#f0f0f0;transform:scaleX(.895);transform-origin:0 0">0,5794</div>
<div class="t" style="left:467px;top:130px;font-size:19px;color:#f0f0f0;transform:scaleX(.895);transform-origin:0 0">0,0933</div>
<div class="t" style="left:538px;top:130px;font-size:19px;color:#f0f0f0;transform:scaleX(.895);transform-origin:0 0">0,7456</div>
<div class="t" style="left:615px;top:130px;font-size:19px;color:#f0f0f0;transform:scaleX(.895);transform-origin:0 0">1,3</div>
<div class="a" style="left:0;top:155px;width:633px;height:31px;background:#7c7c7c"></div>
<div class="t" style="left:12px;top:161px;font-size:19px;font-weight:bold;color:#f0f0f0;transform:scaleX(0.92);transform-origin:0 0">ΔE ITP</div>
<div class="t" style="left:96px;top:161px;font-size:19px;color:#f0f0f0;transform:scaleX(.895);transform-origin:0 0">1,8172</div>
<div class="t" style="left:174px;top:161px;font-size:19px;color:#f0f0f0;transform:scaleX(.895);transform-origin:0 0">7,1625</div>
<div class="t" style="left:243px;top:161px;font-size:19px;color:#f0f0f0;transform:scaleX(.895);transform-origin:0 0">2,3497</div>
<div class="t" style="left:320px;top:161px;font-size:19px;color:#f0f0f0;transform:scaleX(.895);transform-origin:0 0">10,2350</div>
<div class="t" style="left:389px;top:161px;font-size:19px;color:#f0f0f0;transform:scaleX(.895);transform-origin:0 0">0,9573</div>
<div class="t" style="left:467px;top:161px;font-size:19px;color:#f0f0f0;transform:scaleX(.895);transform-origin:0 0">0,3577</div>
<div class="t" style="left:538px;top:161px;font-size:19px;color:#f0f0f0;transform:scaleX(.895);transform-origin:0 0">2,5778</div>
<div class="t" style="left:615px;top:161px;font-size:19px;color:#f0f0f0;transform:scaleX(.895);transform-origin:0 0">0,7</div>
</div>
<div class="t" style="left:1066px;top:669px;width:120px;text-align:center;font-size:19px;color:#f0f0f0;transform:scaleX(.9)">White</div>
<div class="t" style="left:1139px;top:669px;width:120px;text-align:center;font-size:19px;color:#f0f0f0;transform:scaleX(.9)">Red</div>
<div class="t" style="left:1212px;top:669px;width:120px;text-align:center;font-size:19px;color:#f0f0f0;transform:scaleX(.9)">Green</div>
<div class="t" style="left:1285px;top:669px;width:120px;text-align:center;font-size:19px;color:#f0f0f0;transform:scaleX(.9)">Blue</div>
<div class="t" style="left:1358.5px;top:669px;width:120px;text-align:center;font-size:19px;color:#f0f0f0;transform:scaleX(.9)">Cyan</div>
<div class="t" style="left:1433px;top:669px;width:120px;text-align:center;font-size:19px;color:#f0f0f0;transform:scaleX(.9)">Magenta</div>
<div class="t" style="left:1507px;top:669px;width:120px;text-align:center;font-size:19px;color:#f0f0f0;transform:scaleX(.9)">Yellow</div>
<div class="t" style="left:1567px;top:669px;width:120px;text-align:center;font-size:19px;color:#f0f0f0;transform:scaleX(.9)">1</div>
<div class="a" style="left:1628px;top:662px;width:18px;height:33px;background:#1d1d1d"></div>
<div class="a" style="left:1628px;top:695px;width:17px;height:170px;background:#5a5a5a"></div>
<div class="a" style="left:1630px;top:717px;width:13px;height:105px;border-radius:6px;background:#4a4a4a"></div>
<div class="a" style="left:1629px;top:696px;width:15px;height:17px;border-radius:3px;background:#6a6a6a"></div>
<div class="a" style="left:1632px;top:701px;width:0;height:0;border-left:5px solid transparent;border-right:5px solid transparent;border-bottom:6px solid #333"></div>
<div class="a" style="left:1629px;top:847px;width:15px;height:17px;border-radius:3px;background:#6a6a6a"></div>
<div class="a" style="left:1632px;top:853px;width:0;height:0;border-left:5px solid transparent;border-right:5px solid transparent;border-top:6px solid #333"></div>
<div class="a" style="left:995px;top:865px;width:633px;height:19px;background:#5a5a5a"></div>
<div class="a" style="left:1014px;top:867px;width:546px;height:15px;border-radius:7px;background:#4a4a4a"></div>
<div class="a" style="left:996px;top:866px;width:16px;height:17px;border-radius:3px;background:#6a6a6a"></div>
<div class="a" style="left:999px;top:869px;width:0;height:0;border-top:5px solid transparent;border-bottom:5px solid transparent;border-right:6px solid #333"></div>
<div class="a" style="left:1611px;top:866px;width:16px;height:17px;border-radius:3px;background:#6a6a6a"></div>
<div class="a" style="left:1616px;top:869px;width:0;height:0;border-top:5px solid transparent;border-bottom:5px solid transparent;border-left:6px solid #333"></div>
<div class="a" style="left:0px;top:929px;width:155px;height:80px;border-radius:5px;background:linear-gradient(#a8a8a8,#8a8a8a 12%,#6e6e6e 55%,#5a5a5a)"></div>
<div class="a" style="left:6px;top:935px;width:143px;height:45px;border-radius:5px;background:#c0c0c0;box-shadow:inset 0 2px 2px rgba(0,0,0,.35)"></div>
<div class="t" style="left:0px;top:988px;width:155px;text-align:center;font-size:13px;font-weight:bold;letter-spacing:0.4px;color:#2a2a2a">White</div>
<div class="a" style="left:158px;top:929px;width:155px;height:80px;border-radius:5px;background:linear-gradient(#a8a8a8,#8a8a8a 12%,#6e6e6e 55%,#5a5a5a)"></div>
<div class="a" style="left:164px;top:935px;width:143px;height:45px;border-radius:5px;background:#c00000;box-shadow:inset 0 2px 2px rgba(0,0,0,.35)"></div>
<div class="t" style="left:158px;top:988px;width:155px;text-align:center;font-size:13px;font-weight:bold;letter-spacing:0.4px;color:#2a2a2a">Red</div>
<div class="a" style="left:316px;top:929px;width:155px;height:80px;border-radius:5px;background:linear-gradient(#a8a8a8,#8a8a8a 12%,#6e6e6e 55%,#5a5a5a)"></div>
<div class="a" style="left:322px;top:935px;width:143px;height:45px;border-radius:5px;background:#00c000;box-shadow:inset 0 2px 2px rgba(0,0,0,.35)"></div>
<div class="t" style="left:316px;top:988px;width:155px;text-align:center;font-size:13px;font-weight:bold;letter-spacing:0.4px;color:#2a2a2a">Green</div>
<div class="a" style="left:474px;top:929px;width:155px;height:80px;border-radius:5px;background:linear-gradient(#a8a8a8,#8a8a8a 12%,#6e6e6e 55%,#5a5a5a)"></div>
<div class="a" style="left:480px;top:935px;width:143px;height:45px;border-radius:5px;background:#0000c0;box-shadow:inset 0 2px 2px rgba(0,0,0,.35)"></div>
<div class="t" style="left:474px;top:988px;width:155px;text-align:center;font-size:13px;font-weight:bold;letter-spacing:0.4px;color:#2a2a2a">Blue</div>
<div class="a" style="left:632px;top:929px;width:155px;height:80px;border-radius:5px;background:linear-gradient(#a8a8a8,#8a8a8a 12%,#6e6e6e 55%,#5a5a5a)"></div>
<div class="a" style="left:638px;top:935px;width:143px;height:45px;border-radius:5px;background:#00c0c0;box-shadow:inset 0 2px 2px rgba(0,0,0,.35)"></div>
<div class="t" style="left:632px;top:988px;width:155px;text-align:center;font-size:13px;font-weight:bold;letter-spacing:0.4px;color:#2a2a2a">Cyan</div>
<div class="a" style="left:790px;top:929px;width:155px;height:80px;border-radius:5px;background:linear-gradient(#a8a8a8,#8a8a8a 12%,#6e6e6e 55%,#5a5a5a)"></div>
<div class="a" style="left:796px;top:935px;width:143px;height:45px;border-radius:5px;background:#c000c0;box-shadow:inset 0 2px 2px rgba(0,0,0,.35)"></div>
<div class="t" style="left:790px;top:988px;width:155px;text-align:center;font-size:13px;font-weight:bold;letter-spacing:0.4px;color:#2a2a2a">Magenta</div>
<div class="a" style="left:947px;top:929px;width:155px;height:80px;border-radius:5px;background:linear-gradient(#a8a8a8,#8a8a8a 12%,#6e6e6e 55%,#5a5a5a)"></div>
<div class="a" style="left:953px;top:935px;width:143px;height:45px;border-radius:5px;background:#c0c000;box-shadow:inset 0 2px 2px rgba(0,0,0,.35)"></div>
<div class="t" style="left:947px;top:988px;width:155px;text-align:center;font-size:13px;font-weight:bold;letter-spacing:0.4px;color:#2a2a2a">Yellow</div>
<div class="a" style="left:1105px;top:929px;width:156px;height:80px;border-radius:5px;background:linear-gradient(#222,#2c2c2c 40%,#383838)"></div>
<div class="a" style="left:1112px;top:935px;width:142px;height:45px;border-radius:5px;background:#fff"></div>
<div class="t" style="left:1105px;top:988px;width:156px;text-align:center;font-size:13px;font-weight:bold;letter-spacing:0.6px;color:#fff">100W</div>
<div class="a" style="left:1264px;top:929px;width:60px;height:80px;border-radius:5px;background:#2a2a2a"></div>
<div class="a" style="left:1264px;top:929px;width:60px;height:22px;border-radius:5px 5px 0 0;background:linear-gradient(#9c9c9c,#7a7a7a)"></div>
<div class="a" style="left:1264px;top:952px;width:60px;height:55px;background:linear-gradient(#9a9a9a,#777 50%,#555)"></div>
<div class="a" style="left:1284px;top:931px;width:20px;height:20px;border-radius:50%;background:linear-gradient(#666,#999)"></div>
<div class="a" style="left:1288px;top:936px;width:0;height:0;border-left:6px solid transparent;border-right:6px solid transparent;border-bottom:6px solid #333"></div>
<div class="a" style="left:1274px;top:959px;width:40px;height:39px;border-radius:6px;border:3px solid #222;background:linear-gradient(#aaa 0 55%,#888 55%)"></div>
<div class="a" style="left:1286px;top:970px;width:17px;height:17px;background:#000"></div>
<div class="a" style="left:1325px;top:928px;width:58px;height:38px;background:linear-gradient(#b2b2b2,#8e8e8e 45%,#6a6a6a)"></div><div class="a" style="left:1342.0px;top:935px;width:25px;height:25px;border-radius:50%;background:linear-gradient(#7c7c7c,#a8a8a8)"></div><div class="a" style="left:1349px;top:942px;width:10px;height:10px;background:#2a2a2a"></div>
<div class="a" style="left:1383px;top:928px;width:1px;height:38px;background:#2a2a2a"></div>
<div class="a" style="left:1384px;top:928px;width:55px;height:38px;background:linear-gradient(#b2b2b2,#8e8e8e 45%,#6a6a6a)"></div><div class="a" style="left:1399.5px;top:935px;width:25px;height:25px;border-radius:50%;background:linear-gradient(#7c7c7c,#a8a8a8)"></div><div class="a" style="left:1408px;top:941px;width:0;height:0;border-top:6px solid transparent;border-bottom:6px solid transparent;border-left:11px solid #2a2a2a"></div>
<div class="a" style="left:1439px;top:928px;width:1px;height:38px;background:#2a2a2a"></div>
<div class="a" style="left:1440px;top:928px;width:55px;height:38px;background:linear-gradient(#b2b2b2,#8e8e8e 45%,#6a6a6a)"></div><div class="a" style="left:1455.5px;top:935px;width:25px;height:25px;border-radius:50%;background:linear-gradient(#7c7c7c,#a8a8a8)"></div>
<div class="a" style="left:1495px;top:928px;width:2px;height:77px;background:#2a2a2a"></div>
<div class="a" style="left:1497px;top:928px;width:55px;height:38px;background:linear-gradient(#b2b2b2,#8e8e8e 45%,#6a6a6a)"></div><div class="a" style="left:1512.5px;top:935px;width:25px;height:25px;border-radius:50%;background:linear-gradient(#7c7c7c,#a8a8a8)"></div>
<div class="a" style="left:1552px;top:928px;width:1px;height:38px;background:#2a2a2a"></div>
<div class="a" style="left:1553px;top:928px;width:55px;height:38px;background:linear-gradient(#b2b2b2,#8e8e8e 45%,#6a6a6a)"></div><div class="a" style="left:1568.5px;top:935px;width:25px;height:25px;border-radius:50%;background:linear-gradient(#7c7c7c,#a8a8a8)"></div>
<svg class="a" style="left:1615px;top:925px" width="42" height="42" viewBox="-21 -21 42 42"><g stroke="#000" stroke-opacity=".45" stroke-width="7" transform="translate(1.5,2)"><line x1="0" y1="-16" x2="0" y2="16"/><line x1="-14" y1="-8" x2="14" y2="8"/><line x1="-14" y1="8" x2="14" y2="-8"/></g><g stroke="#e20000" stroke-width="6.5"><line x1="0" y1="-17" x2="0" y2="17"/><line x1="-15" y1="-8.5" x2="15" y2="8.5"/><line x1="-15" y1="8.5" x2="15" y2="-8.5"/></g></svg>
<div class="a" style="left:1325px;top:967px;width:170px;height:40px;background:linear-gradient(#b2b2b2,#8e8e8e 45%,#6a6a6a)"></div>
<div class="a" style="left:1497px;top:967px;width:167px;height:40px;background:linear-gradient(#b2b2b2,#8e8e8e 45%,#6a6a6a);border-top-right-radius:6px"></div>
<div class="a" style="left:1352px;top:974px;width:24px;height:24px;border-radius:50%;background:linear-gradient(#7c7c7c,#a8a8a8)"></div>
<div class="a" style="left:1619px;top:974px;width:24px;height:24px;border-radius:50%;background:linear-gradient(#7c7c7c,#a8a8a8)"></div>
<div class="t" style="left:1395.5px;top:973px;font-size:28px;font-weight:bold;color:#353535">Back</div>
<div class="t" style="left:1530.5px;top:973px;font-size:28px;font-weight:bold;letter-spacing:2.2px;color:#353535">Next</div>
<svg class="a" style="left:0;top:0" width="1667" height="1005" viewBox="0 0 1667 1005">
<g fill="none" stroke="#2e2e2e" stroke-width="2.4">
<path d="M1462.5,941.8 h-2.6 v12 h2.6"/>
<path d="M1472.7,941.8 h2.6 v12 h-2.6"/>
</g>
<g fill="#2e2e2e"><circle cx="1465.3" cy="947.6" r="1"/><circle cx="1467.6" cy="947.6" r="1"/><circle cx="1469.9" cy="947.6" r="1"/></g>
<g fill="none" stroke="#2e2e2e" stroke-width="2.3">
<path d="M1524.4,947.2 C1521.5,943.8 1516.4,943.8 1516.4,947.2 C1516.4,950.6 1521.5,950.6 1524.4,947.2 C1527.3,943.8 1532.4,943.8 1532.4,947.2 C1532.4,950.6 1527.3,950.6 1524.4,947.2 Z"/>
</g>
<g fill="none" stroke="#2e2e2e" stroke-width="2.6">
<path d="M1575.2,946.5 A5.6,5.6 0 0 1 1585,943.2"/>
<path d="M1586,949 A5.6,5.6 0 0 1 1576.2,952.5"/>
</g>
<g fill="#2e2e2e">
<path d="M1587.6,940.2 L1587.6,947.2 L1581,945.8 Z"/>
<path d="M1573.6,955.6 L1573.6,948.6 L1580.2,950 Z"/>
</g>
<g fill="none" stroke="#333" stroke-width="1.5">
<path d="M1362.5,980.8 L1357.8,986.2 L1362.5,991.6"/>
<path d="M1368.5,980.8 L1363.8,986.2 L1368.5,991.6"/>
<path d="M1626.2,980.8 L1630.9,986.2 L1626.2,991.6"/>
<path d="M1632.2,980.8 L1636.9,986.2 L1632.2,991.6"/>
</g>
</svg>
<script>
(function(){
var L=[[0.17411,0.00496],[0.17401,0.00498],[0.17380,0.00492],[0.17356,0.00492],[0.17334,0.00480],[0.17302,0.00478],[0.17258,0.00480],[0.17209,0.00483],[0.17141,0.00510],[0.17030,0.00579],[0.16888,0.00690],[0.16690,0.00856],[0.16441,0.01086],[0.16110,0.01379],[0.15664,0.01770],[0.15099,0.02274],[0.14396,0.02970],[0.13550,0.03988],[0.12412,0.05780],[0.10959,0.08684],[0.09129,0.13270],[0.06871,0.20072],[0.04539,0.29498],[0.02346,0.41270],[0.00817,0.53842],[0.00386,0.65482],[0.01387,0.75019],[0.03885,0.81202],[0.07430,0.83380],[0.11416,0.82621],[0.15472,0.80586],[0.19288,0.78163],[0.22962,0.75433],[0.26578,0.72432],[0.30160,0.69231],[0.33736,0.65885],[0.37310,0.62445],[0.40874,0.58961],[0.44406,0.55471],[0.47877,0.52020],[0.51249,0.48659],[0.54479,0.45443],[0.57515,0.42423],[0.60293,0.39650],[0.62704,0.37249],[0.64823,0.35139],[0.66576,0.33401],[0.68008,0.31975],[0.69150,0.30834],[0.70061,0.29930],[0.70792,0.29203],[0.71403,0.28593],[0.71903,0.28093],[0.72303,0.27695],[0.72599,0.27401],[0.72827,0.27173],[0.72997,0.27003],[0.73109,0.26891],[0.73199,0.26801],[0.73272,0.26728],[0.73342,0.26658],[0.73405,0.26595],[0.73439,0.26561],[0.73459,0.26541],[0.73469,0.26531]];
function g(c){c=c<0?0:c;return Math.round(255*Math.pow(c,GAM));}
var GAM=1.0;
function g2(c){c=c<0?0:c;return Math.round(255*Math.pow(c,1/2.2));}
function rgbFromXY(x,y){
  var X=x/y,Y=1,Z=(1-x-y)/y;
  var r=3.2406*X-1.5372*Y-0.4986*Z, gg=-0.9689*X+1.8758*Y+0.0415*Z, b=0.0557*X-0.2040*Y+1.0570*Z;
  return [r,gg,b];
}
var cv=document.getElementById('cie');
if(cv&&cv.getContext){
  var W=cv.width,H=cv.height;
  var off=document.createElement('canvas');off.width=W;off.height=H;
  var oc=off.getContext('2d');var im=oc.createImageData(W,H);var d=im.data;
  var UX0=1016.8-1017, US=1065.0, VY0=610.4-119, VS=818.2;
  for(var j=0;j<H;j++){for(var i=0;i<W;i++){
    var u=(i+0.5-UX0)/US, v=(VY0-(j+0.5))/VS;
    var den=6*u-16*v+12; var x=9*u/den, y=4*v/den;
    if(y<=0.0001){y=0.0001;}
    var c=rgbFromXY(x,y); var out=(c[0]<0||c[1]<0||c[2]<0);
    var r=Math.max(c[0],0),gg=Math.max(c[1],0),b=Math.max(c[2],0);
    var m=Math.max(r,gg,b); if(m<=0)m=1;
    r/=m;gg/=m;b/=m;
    var k=out?0.6:1;
    var p=(j*W+i)*4; d[p]=g(r)*k; d[p+1]=g(gg)*k; d[p+2]=g(b)*k; d[p+3]=255;
  }}
  oc.putImageData(im,0,0);
  var ctx=cv.getContext('2d');
  var P=[];
  for(var n=0;n<L.length;n++){var x=L[n][0],y=L[n][1];var den=-2*x+12*y+3;var u=4*x/den,v=9*y/den;
    P.push([UX0+u*US,VY0-v*VS]);}
  ctx.beginPath();ctx.moveTo(P[0][0],P[0][1]);
  for(var n=0;n<P.length-1;n++){
    var p0=P[Math.max(n-1,0)],p1=P[n],p2=P[n+1],p3=P[Math.min(n+2,P.length-1)];
    for(var k=1;k<=8;k++){var t=k/8,t2=t*t,t3=t2*t;
      var xx=0.5*((2*p1[0])+(-p0[0]+p2[0])*t+(2*p0[0]-5*p1[0]+4*p2[0]-p3[0])*t2+(-p0[0]+3*p1[0]-3*p2[0]+p3[0])*t3);
      var yy=0.5*((2*p1[1])+(-p0[1]+p2[1])*t+(2*p0[1]-5*p1[1]+4*p2[1]-p3[1])*t2+(-p0[1]+3*p1[1]-3*p2[1]+p3[1])*t3);
      ctx.lineTo(xx,yy);}
  }
  ctx.closePath();ctx.save();ctx.clip();ctx.drawImage(off,0,0);ctx.restore();
}
var xv=document.getElementById('xy');
if(xv&&xv.getContext){
  var W2=xv.width,H2=xv.height,c2=xv.getContext('2d');var im2=c2.createImageData(W2,H2);var d2=im2.data;
  var x0=0.255,x1=0.375,y0=0.275,y1=0.385;
  for(var j=0;j<H2;j++){for(var i=0;i<W2;i++){
    var x=x0+(x1-x0)*(i+0.5)/W2, y=y1-(y1-y0)*(j+0.5)/H2;
    var c=rgbFromXY(x,y);var r=Math.max(c[0],0),gg=Math.max(c[1],0),b=Math.max(c[2],0);var m=Math.max(r,gg,b);
    r/=m;gg/=m;b/=m;var p=(j*W2+i)*4;d2[p]=g2(r);d2[p+1]=g2(gg);d2[p+2]=g2(b);d2[p+3]=255;
  }}
  c2.putImageData(im2,0,0);
}
})();
</script>
</body></html>
